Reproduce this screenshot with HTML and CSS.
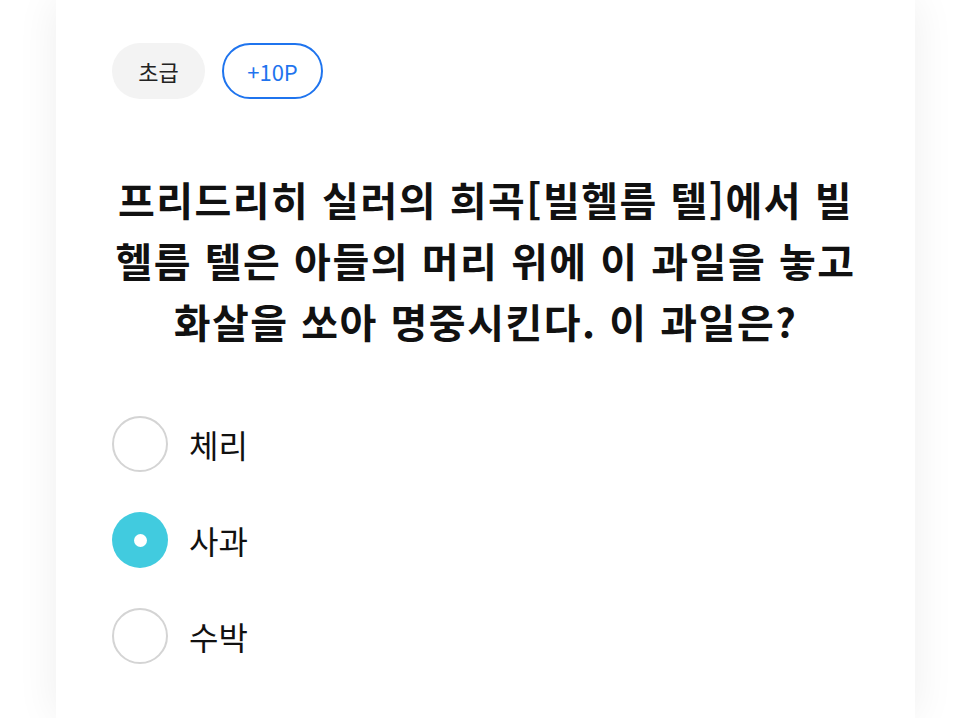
FILE: index.html
```html
<!DOCTYPE html>
<html lang="ko">
<head>
    <meta charset="UTF-8">
    <meta name="viewport" content="width=device-width, initial-scale=1.0">
    <title>퀴즈</title>
    <link rel="stylesheet" href="styles.css">
</head>
<body>
    <div class="quiz-card">
        <div class="badge-row">
            <span class="badge badge-level">초급</span>
            <span class="badge badge-point">+10P</span>
        </div>

        <h1 class="question">프리드리히 실러의 희곡[빌헬름 텔]에서 빌<br>헬름 텔은 아들의 머리 위에 이 과일을 놓고<br>화살을 쏘아 명중시킨다. 이 과일은?</h1>

        <div class="option-list">
            <label class="option">
                <span class="radio"></span>
                <span class="option-text">체리</span>
            </label>
            <label class="option selected">
                <span class="radio"></span>
                <span class="option-text">사과</span>
            </label>
            <label class="option">
                <span class="radio"></span>
                <span class="option-text">수박</span>
            </label>
        </div>
    </div>
</body>
</html>
```

FILE: styles.css
```css
* {
    margin: 0;
    padding: 0;
    box-sizing: border-box;
    font-family: 'Noto Sans CJK KR', 'Noto Sans', sans-serif;
}

body {
    background-color: #fff;
    color: #111;
    height: 100vh;
    overflow: hidden;
}

.quiz-card {
    width: 859px;
    min-height: 100vh;
    margin-left: 56px;
    background-color: white;
    box-shadow: 0 0 40px rgba(0, 0, 0, 0.07);
    padding: 43px 56px;
}

.badge-row {
    display: flex;
    gap: 17px;
}

.badge {
    height: 56px;
    border-radius: 28px;
    display: flex;
    align-items: center;
    justify-content: center;
    font-size: 22px;
}

.badge-level {
    width: 93px;
    background-color: #f3f3f3;
    color: #222;
}

.badge-point {
    width: 101px;
    border: 2.5px solid #1f74ee;
    color: #1f74ee;
}

.question {
    margin-top: 70px;
    text-align: center;
    font-size: 40px;
    font-weight: bold;
    letter-spacing: 1.5px;
    line-height: 61px;
    color: #111;
}

.option-list {
    margin-top: 64px;
    display: flex;
    flex-direction: column;
    gap: 40px;
}

.option {
    display: flex;
    align-items: center;
    gap: 21px;
    cursor: pointer;
}

.radio {
    width: 56px;
    height: 56px;
    border-radius: 50%;
    border: 2px solid #d4d4d4;
    display: flex;
    align-items: center;
    justify-content: center;
}

.option.selected .radio {
    border: none;
    background-color: #41cbdf;
}

.option.selected .radio::after {
    content: '';
    width: 13px;
    height: 13px;
    border-radius: 50%;
    background-color: white;
}

.option-text {
    font-size: 32px;
    color: #111;
}
```
